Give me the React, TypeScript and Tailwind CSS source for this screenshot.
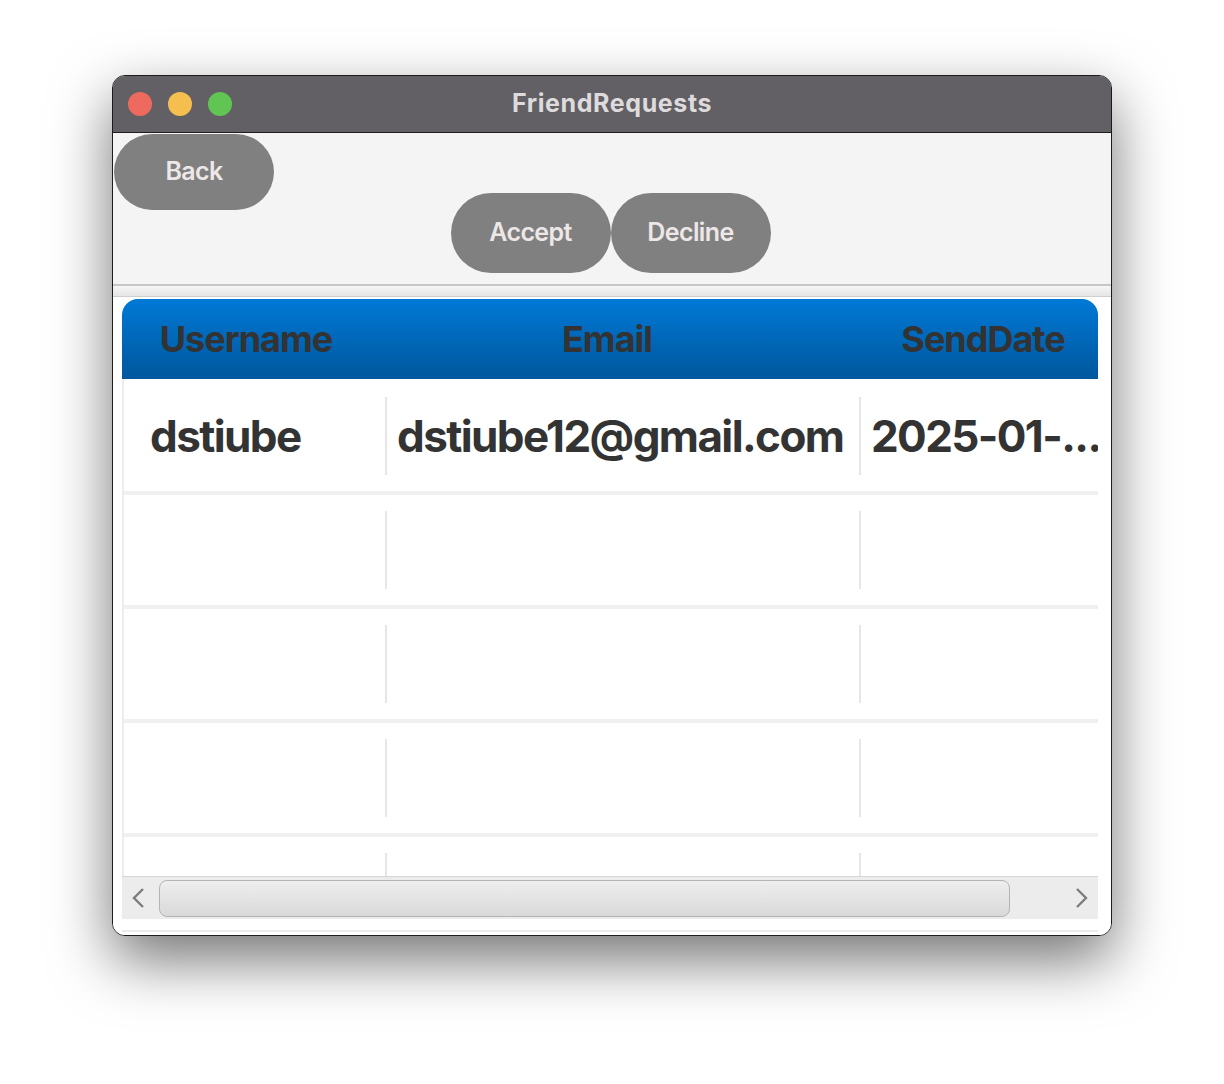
import React from "react";

const rows = [
  { username: "dstiube", email: "dstiube12@gmail.com", date: "2025-01-..." },
  { username: "", email: "", date: "" },
  { username: "", email: "", date: "" },
  { username: "", email: "", date: "" },
  { username: "", email: "", date: "" },
];

function PillButton({ label, className = "" }: { label: string; className?: string }) {
  return (
    <button
      className={`flex items-center justify-center rounded-full bg-[#808080] text-[25px] font-semibold tracking-[-0.6px] text-[#ede7e7] ${className}`}
    >
      {label}
    </button>
  );
}

function Chevron({ dir }: { dir: "left" | "right" }) {
  return (
    <svg width="16" height="24" viewBox="0 0 16 24" className="shrink-0">
      <path
        d={dir === "left" ? "M13 3 L4 12 L13 21" : "M3 3 L12 12 L3 21"}
        fill="none"
        stroke="#7d7d7d"
        strokeWidth="2.4"
      />
    </svg>
  );
}

export default function App() {
  return (
    <div
      className="flex min-h-[1084px] justify-center bg-white pt-[75px]"
      style={{ fontFamily: "Inter, 'Noto Sans', sans-serif" }}
    >
      <div className="flex h-[861px] w-[1000px] flex-col overflow-hidden rounded-[13px] border border-[#1c1c1c] bg-white shadow-[0_24px_60px_rgba(0,0,0,0.55)]">
        {/* title bar */}
        <div className="relative flex h-[57px] shrink-0 items-center border-b border-[#1e1e1e] bg-[#626064] pl-[15px]">
          <div className="flex gap-[16px]">
            <span className="h-[24px] w-[24px] rounded-full bg-[#ee6a5e]" />
            <span className="h-[24px] w-[24px] rounded-full bg-[#f5bf4f]" />
            <span className="h-[24px] w-[24px] rounded-full bg-[#61c554]" />
          </div>
          <div className="absolute inset-0 flex items-center justify-center text-[25px] font-bold tracking-[0.6px] text-[#dedbdd]">
            FriendRequests
          </div>
        </div>

        {/* toolbar */}
        <div className="flex h-[151px] shrink-0 flex-col bg-[#f4f4f4] pl-[1px]">
          <PillButton label="Back" className="mt-[1px] h-[76px] w-[160px] self-start" />
          <div className="mt-[-17px] flex justify-center pr-[4px]">
            <PillButton label="Accept" className="h-[80px] w-[160px]" />
            <PillButton label="Decline" className="h-[80px] w-[160px]" />
          </div>
        </div>
        <div className="h-[2px] shrink-0 bg-[#c6c6c6]" />
        <div className="h-[10px] shrink-0 bg-gradient-to-b from-[#f6f6f6] to-[#e6e6e6]" />
        <div className="h-[1px] shrink-0 bg-[#cfcfcf]" />

        {/* table area */}
        <div className="flex min-h-0 flex-1 flex-col bg-white pb-[3px] pl-[9px] pr-[13px] pt-[2px]">
          <div className="flex min-h-0 flex-1 flex-col overflow-hidden">
            <div className="flex h-[80px] shrink-0 items-center overflow-hidden rounded-t-[16px] bg-gradient-to-b from-[#0079d6] to-[#00579d] text-[36px] font-bold tracking-[-1px] text-[#333333]">
              <div className="w-[248px] shrink-0 text-center">Username</div>
              <div className="w-[474px] shrink-0 text-center">Email</div>
              <div className="w-[278px] shrink-0 text-center">SendDate</div>
            </div>
            <div className="min-h-0 flex-1 overflow-hidden border-l-2 border-[#ededed] pt-[2px]">
              {rows.map((r, i) => (
                <div
                  key={i}
                  className="flex h-[114px] shrink-0 items-center border-b-4 border-[#f0f0f0] text-[44px] font-bold tracking-[-1.6px] text-[#333333]"
                >
                  <div className="w-[261px] shrink-0 whitespace-nowrap pl-[26px]">{r.username}</div>
                  <div className="flex h-[78px] w-[474px] shrink-0 items-center whitespace-nowrap border-l-2 border-[#e6e6e6] pl-[10px]">
                    {r.email}
                  </div>
                  <div className="flex h-[78px] w-[300px] shrink-0 items-center whitespace-nowrap border-l-2 border-[#e6e6e6] pl-[10px]">
                    {r.date}
                  </div>
                </div>
              ))}
            </div>
            {/* horizontal scrollbar */}
            <div className="flex h-[43px] shrink-0 items-center gap-[13px] border-t border-[#d6d6d6] bg-[#ececec] px-[8px]">
              <Chevron dir="left" />
              <div className="h-[37px] flex-1 rounded-[8px] border border-[#b4b4b4] bg-gradient-to-b from-[#eeeeee] to-[#d9d9d9]" />
              <div className="w-[38px] shrink-0" />
              <Chevron dir="right" />
            </div>
          </div>
          <div className="mt-[11px] h-[2px] shrink-0 bg-[#ececec]" />
        </div>
      </div>
    </div>
  );
}
